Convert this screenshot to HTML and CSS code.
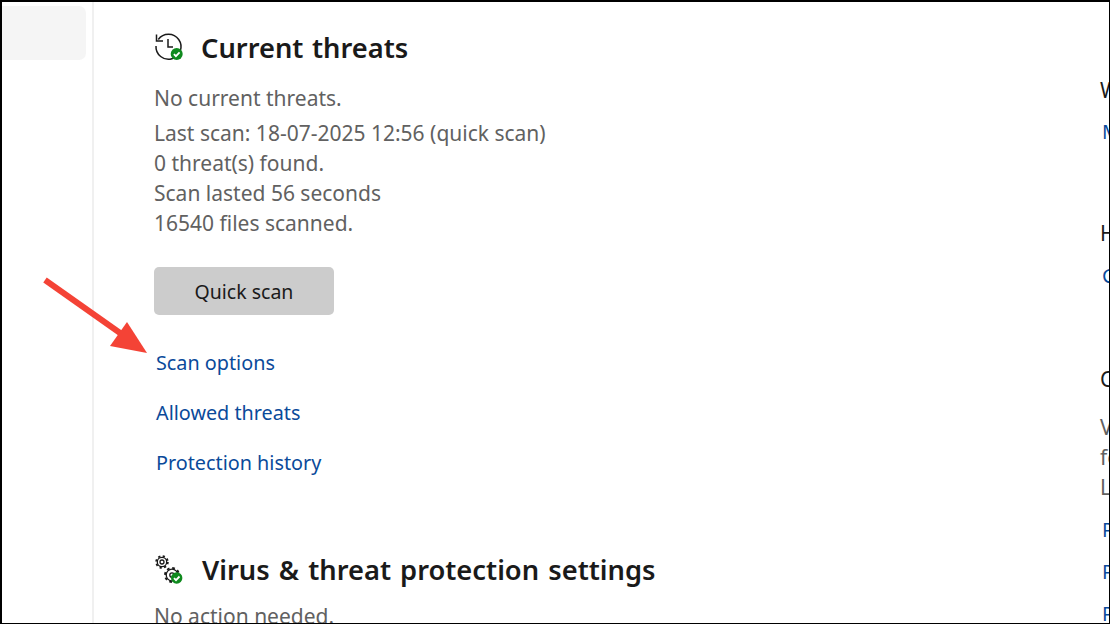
FILE: index.html
```html
<!DOCTYPE html>
<html lang="en">
<head>
<meta charset="utf-8">
<title>Virus &amp; threat protection</title>
<link rel="stylesheet" href="styles.css">
</head>
<body>
<div class="frame">
  <aside class="sidebar"><div class="nav-item"></div></aside>
  <main class="main">
    <section class="threats">
      <div class="heading-row">
        <svg class="icon" viewBox="0 0 30 30" fill="none" stroke="#1a1a1a" stroke-width="1.5">
          <path d="M4.3 7.5A12.5 12.5 0 1 1 2 14"/>
          <path d="M2.5 2.5V9H9"/>
          <path d="M14 7V15H19"/>
          <circle cx="22.7" cy="22" r="6" fill="#0f8a1e" stroke="none"/>
          <path d="M19.9 22.1l2 2 3.7-3.8" stroke="#fff" stroke-width="1.8"/>
        </svg>
        <h2 class="heading">Current threats</h2>
      </div>
      <p class="status">No current threats.</p>
      <p class="details">Last scan: 18-07-2025 12:56 (quick scan)<br>0 threat(s) found.<br>Scan lasted 56 seconds<br>16540 files scanned.</p>
      <button class="scan-button">Quick scan</button>
      <ul class="links">
        <li><a href="#">Scan options</a></li>
        <li><a href="#">Allowed threats</a></li>
        <li><a href="#">Protection history</a></li>
      </ul>
    </section>
    <section class="settings">
      <div class="heading-row">
        <svg class="icon" viewBox="0 0 30 30" fill="none" stroke="#1a1a1a">
          <circle cx="8" cy="8" r="2" stroke-width="1.3"/>
          <circle cx="8" cy="8" r="4.7" stroke-width="1.3"/>
          <circle cx="8" cy="8" r="5.8" stroke-width="1.9" stroke-dasharray="2.2 2.36"/>
          <circle cx="18" cy="21" r="2.2" stroke-width="1.3"/>
          <circle cx="18" cy="21" r="5.8" stroke-width="1.3"/>
          <circle cx="18" cy="21" r="7" stroke-width="1.9" stroke-dasharray="2.7 2.8"/>
          <circle cx="22.7" cy="24" r="5.7" fill="#0f8a1e" stroke="none"/>
          <path d="M20 24.1l2 2 3.5-3.6" stroke="#fff" stroke-width="1.8"/>
        </svg>
        <h2 class="heading">Virus &amp; threat protection settings</h2>
      </div>
      <p class="status">No action needed.</p>
    </section>
  </main>
  <aside class="side-panel">
    <section class="side-first">
      <h3 class="side-title">Who's protecting me?</h3>
      <a class="side-link" href="#">Manage providers</a>
    </section>
    <section class="side-second">
      <h3 class="side-title">Have a question?</h3>
      <a class="side-link" href="#">Get help</a>
    </section>
    <section class="side-third">
      <h3 class="side-title">Change your privacy settings</h3>
      <p class="side-text">View and change privacy settings<br>for your Windows 11 Pro device.<br>Learn more</p>
      <a class="side-link" href="#">Privacy settings</a>
      <a class="side-link" href="#">Privacy dashboard</a>
      <a class="side-link" href="#">Privacy Statement</a>
    </section>
  </aside>
  <svg class="arrow" viewBox="0 0 120 80" width="120" height="80">
    <path d="M3 2L88 62" stroke="#f44336" stroke-width="6" fill="none"/>
    <path d="M85 44L105 75L68 68Z" fill="#f44336"/>
  </svg>
</div>
</body>
</html>
```
FILE: styles.css
```css
* { box-sizing: border-box; }
html, body { margin: 0; padding: 0; background: #fff; }
body {
  font-family: "Noto Sans", "Open Sans", sans-serif;
  color: #1a1a1a;
}
.frame {
  position: relative;
  display: flex;
  width: 1110px;
  height: 624px;
  overflow: hidden;
  background: #fff;
  border-style: solid;
  border-color: #000;
  border-width: 2px 1px 1px 2px;
}
.sidebar {
  flex: none;
  width: 92px;
  padding-top: 4px;
  border-right: 2px solid #f0f0f0;
}
.nav-item {
  width: 84px;
  height: 54px;
  background: #f5f5f5;
  border-radius: 0 7px 7px 0;
}
.main {
  flex: none;
  width: 1006px;
  padding: 28px 0 0 60px;
}
.heading-row {
  display: flex;
  align-items: center;
  height: 34px;
}
.icon { flex: none; width: 30px; height: 30px; margin-right: 17px; }
.heading {
  margin: 0;
  padding-top: 2px;
  font-size: 27.3px;
  font-weight: 600;
  word-spacing: 1.5px;
  line-height: 34px;
  color: #1a1a1a;
}
.status, .details {
  margin: 0;
  font-size: 21px;
  line-height: 30px;
  color: #616161;
}
.status { margin-top: 19px; }
.details { margin-top: 5px; }
.scan-button {
  display: block;
  width: 180px;
  height: 48px;
  margin-top: 29px;
  padding: 0;
  border: 0;
  border-radius: 5px;
  background: #cccccc;
  color: #1a1a1a;
  font: inherit;
  font-size: 19.5px;
}
.links { list-style: none; margin: 23px 0 0; padding: 0 0 0 2px; }
.links li { height: 50px; line-height: 50px; font-size: 19.8px; }
.links a { color: #0a4a9a; text-decoration: none; }
.settings { margin-top: 64px; }
.settings .icon { margin-right: 18px; }
.settings .heading { word-spacing: 2px; }
.settings .status { margin-top: 15px; }
.side-panel {
  flex: none;
  width: 400px;
  padding-top: 73px;
}
.side-title {
  margin: 0;
  font-size: 21px;
  font-weight: 400;
  line-height: 30px;
  color: #1a1a1a;
  white-space: nowrap;
}
.side-link {
  display: block;
  height: 42px;
  line-height: 42px;
  font-size: 19.8px;
  color: #0a4a9a;
  text-decoration: none;
  padding-left: 2px;
  white-space: nowrap;
}
.side-first .side-title { margin-bottom: 6px; }
.side-second { margin-top: 65px; }
.side-second .side-title { margin-bottom: 7px; }
.side-third { margin-top: 67px; }
.side-text {
  margin: 18px 0 7px;
  font-size: 21px;
  line-height: 30px;
  color: #616161;
  white-space: nowrap;
}
.arrow {
  position: absolute;
  left: 40px;
  top: 276px;
  overflow: visible;
}
```
